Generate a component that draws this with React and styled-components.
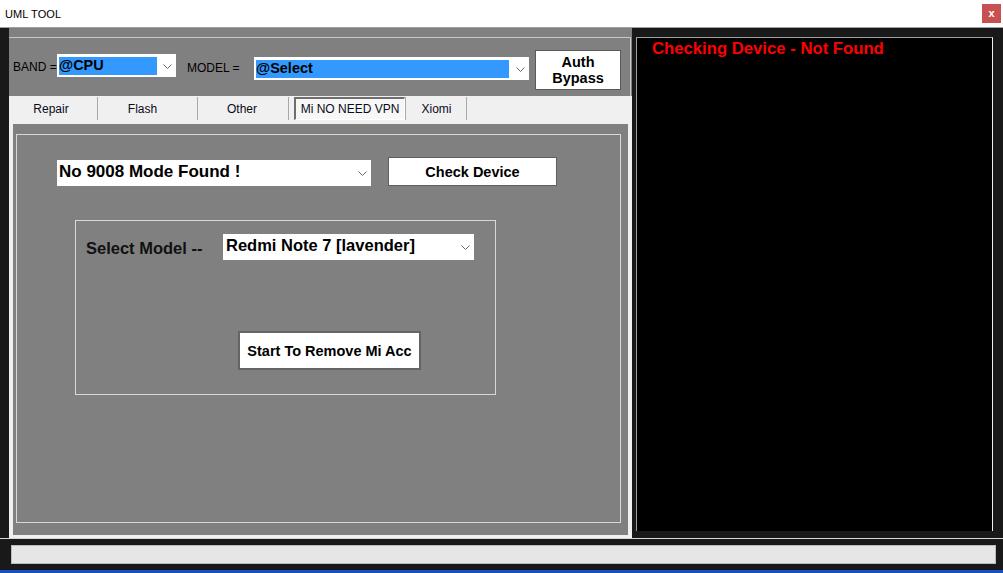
import styled, { createGlobalStyle } from "styled-components";

const GlobalStyle = createGlobalStyle`
  *, *::before, *::after {
    box-sizing: border-box;
  }
  html, body {
    margin: 0;
    padding: 0;
    background: #1a4fbf;
    font-family: "Liberation Sans", Arial, sans-serif;
  }
`;

const Chevron = () => (
  <svg width="9" height="5" viewBox="0 0 9 5">
    <polyline points="0.5,0.5 4.5,4.5 8.5,0.5" fill="none" stroke="#6a6a6a" strokeWidth="1" />
  </svg>
);

const Combo = ({ width, height, value, selected, hlWidth, size, top, pad }) => (
  <ComboBox width={width} height={height} top={top} pad={pad}>
    <ComboValue selected={selected} hlWidth={hlWidth} size={size}>
      {value}
    </ComboValue>
    <ChevronBox>
      <Chevron />
    </ChevronBox>
  </ComboBox>
);

const App = () => {
  return (
    <>
      <GlobalStyle />
      <Window>
        <TitleBar>
          <Title>UML TOOL</Title>
          <CloseBtn>x</CloseBtn>
        </TitleBar>

        <Main>
          <LeftPanel>
            <TopGroup>
              <Label width={44} top={22}>BAND =</Label>
              <Combo width={119} height={23} top={16} value="@CPU" selected hlWidth={98} size={14.5} pad={2} />
              <Label width={67} top={23} left={11}>MODEL =</Label>
              <Combo width={275} height={23} top={19} value="@Select" selected hlWidth={253} size={14.5} pad={2} />
              <AuthBtn>
                Auth
                <br />
                Bypass
              </AuthBtn>
            </TopGroup>

            <TabControl>
              <TabStrip>
                <Tab width={85} shift={8}>Repair</Tab>
                <Tab width={100} shift={10}>Flash</Tab>
                <Tab width={91} shift={2}>Other</Tab>
                <ActiveTab>Mi NO NEED VPN</ActiveTab>
                <Tab width={62} shift={-1} first>Xiomi</Tab>
              </TabStrip>

              <TabPage>
                <PageGroup>
                  <DeviceRow>
                    <Combo width={314} height={26} top={3} value="No 9008 Mode Found !" size={17} pad={2} />
                    <ActionBtn width={169} height={29} left={17}>
                      Check Device
                    </ActionBtn>
                  </DeviceRow>

                  <ModelGroup>
                    <ModelRow>
                      <BigLabel>Select Model --</BigLabel>
                      <Combo width={251} height={26} value="Redmi Note 7 [lavender]" size={16.5} pad={3} />
                    </ModelRow>
                    <RemoveBtn>Start To Remove Mi Acc</RemoveBtn>
                  </ModelGroup>
                </PageGroup>
              </TabPage>
            </TabControl>
          </LeftPanel>

          <RightPanel>
            <Console>
              <LogLine>Checking Device - Not Found</LogLine>
            </Console>
          </RightPanel>
        </Main>

        <Bottom>
          <StatusBar />
        </Bottom>
      </Window>
    </>
  );
};
export default App;

const Window = styled.div`
  width: 1003px;
  height: 570px;
  background: #191919;
  display: flex;
  flex-direction: column;
`;

const TitleBar = styled.div`
  height: 28px;
  flex-shrink: 0;
  background: #ffffff;
  border-bottom: 1px solid #a0a0a0;
  display: flex;
  align-items: center;
  justify-content: space-between;
  padding: 0 2px 0 5px;
`;

const Title = styled.div`
  font-size: 11px;
  color: #000;
  letter-spacing: 0.1px;
`;

const CloseBtn = styled.div`
  width: 19px;
  height: 19px;
  margin-top: -1px;
  background: #c75050;
  color: #fff;
  font-size: 11px;
  font-weight: bold;
  display: flex;
  align-items: center;
  justify-content: center;
  line-height: 1;
`;

const Main = styled.div`
  height: 510px;
  flex-shrink: 0;
  display: flex;
`;

const LeftPanel = styled.div`
  margin-left: 9px;
  width: 623px;
  background: #808080;
  display: flex;
  flex-direction: column;
  padding-top: 9px;
`;

const TopGroup = styled.div`
  height: 59px;
  flex-shrink: 0;
  margin-right: 1px;
  border-top: 1px solid #c8c8c8;
  border-right: 1px solid #c8c8c8;
  display: flex;
  align-items: flex-start;
  padding-left: 4px;
`;

const Label = styled.div`
  width: ${(p) => p.width}px;
  margin-top: ${(p) => p.top}px;
  margin-left: ${(p) => p.left || 0}px;
  font-size: 12px;
  line-height: 14px;
  color: #000;
  white-space: nowrap;
`;

const ComboBox = styled.div`
  width: ${(p) => p.width}px;
  height: ${(p) => p.height}px;
  margin-top: ${(p) => p.top || 0}px;
  flex-shrink: 0;
  background: #fff;
  display: flex;
  align-items: center;
  padding: 0 4px 0 ${(p) => p.pad}px;
`;

const ComboValue = styled.div`
  ${(p) => (p.selected ? `width: ${p.hlWidth}px; height: 18px; background: #3399ff;` : "flex: 1;")}
  font-size: ${(p) => p.size}px;
  font-weight: bold;
  color: #000;
  line-height: ${(p) => (p.selected ? "16px" : "19px")};
  margin-bottom: ${(p) => (p.selected ? "0" : "4px")};
  white-space: nowrap;
  overflow: hidden;
`;

const ChevronBox = styled.div`
  margin-left: auto;
  display: flex;
  align-items: center;
  padding-top: 1px;
`;

const AuthBtn = styled.div`
  width: 86px;
  height: 40px;
  margin-top: 12px;
  margin-left: 6px;
  background: #fff;
  border: 1px solid #5a5a5a;
  display: flex;
  align-items: center;
  justify-content: center;
  text-align: center;
  font-size: 14.5px;
  font-weight: bold;
  line-height: 16px;
  color: #000;
`;

const TabControl = styled.div`
  flex: 1;
  background: #f0f0f0;
  display: flex;
  flex-direction: column;
  padding: 0 4px 3px 4px;
`;

const TabStrip = styled.div`
  height: 28px;
  flex-shrink: 0;
  display: flex;
  align-items: flex-start;
`;

const Tab = styled.div`
  width: ${(p) => p.width}px;
  height: 23px;
  margin-top: 1px;
  border-right: 1px solid #a8a8a8;
  ${(p) => (p.first ? "border-left: 1px solid #a8a8a8;" : "")}
  padding-right: ${(p) => Math.max(p.shift, 0)}px;
  padding-left: ${(p) => Math.max(-p.shift, 0)}px;
  display: flex;
  align-items: center;
  justify-content: center;
  font-size: 12px;
  color: #0a0a20;
`;

const ActiveTab = styled.div`
  width: 111px;
  height: 23px;
  margin-top: 1px;
  margin-left: 5px;
  border-top: 2px solid #6e6e6e;
  border-left: 2px solid #6e6e6e;
  border-bottom: 1px solid #ffffff;
  border-right: 1px solid #ffffff;
  background: #f7f7f7;
  display: flex;
  align-items: center;
  justify-content: center;
  font-size: 12px;
  color: #0a0a20;
  white-space: nowrap;
`;

const TabPage = styled.div`
  flex: 1;
  background: #808080;
  display: flex;
  padding: 10px 7px 12px 3px;
`;

const PageGroup = styled.div`
  flex: 1;
  border: 1px solid #d8d8d8;
  display: flex;
  flex-direction: column;
`;

const DeviceRow = styled.div`
  display: flex;
  align-items: flex-start;
  margin-top: 22px;
  padding-left: 40px;
`;

const ActionBtn = styled.div`
  width: ${(p) => p.width}px;
  height: ${(p) => p.height}px;
  margin-left: ${(p) => p.left}px;
  background: #fff;
  border: 1px solid #5f5f5f;
  display: flex;
  align-items: center;
  justify-content: center;
  font-size: 14.5px;
  font-weight: bold;
  color: #000;
`;

const ModelGroup = styled.div`
  width: 421px;
  height: 175px;
  margin-top: 34px;
  margin-left: 58px;
  border: 1px solid #d8d8d8;
  display: flex;
  flex-direction: column;
`;

const ModelRow = styled.div`
  display: flex;
  align-items: center;
  margin-top: 13px;
  padding-left: 10px;
`;

const BigLabel = styled.div`
  width: 137px;
  font-size: 16.5px;
  font-weight: bold;
  color: #111;
  padding-top: 2px;
  white-space: nowrap;
`;

const RemoveBtn = styled.div`
  width: 183px;
  height: 39px;
  margin-top: 71px;
  margin-left: 162px;
  background: #fff;
  border: 2px solid #646464;
  display: flex;
  align-items: center;
  justify-content: center;
  font-size: 14.5px;
  font-weight: bold;
  color: #000;
  white-space: nowrap;
`;

const RightPanel = styled.div`
  flex: 1;
  display: flex;
  padding: 9px 10px 7px 4px;
`;

const Console = styled.div`
  flex: 1;
  background: #000;
  border-top: 1px solid #a0a0a0;
  border-left: 1px solid #a0a0a0;
  border-right: 1px solid #f0f0f0;
  padding: 1px 0 0 15px;
`;

const LogLine = styled.div`
  color: #ff0000;
  font-size: 16.7px;
  font-weight: bold;
  line-height: 20px;
`;

const Bottom = styled.div`
  flex: 1;
  border-top: 1px solid #d8d8d8;
  padding: 6px 7px 0 11px;
`;

const StatusBar = styled.div`
  height: 19px;
  background: #e6e6e6;
  border: 1px solid #bcbcbc;
`;
